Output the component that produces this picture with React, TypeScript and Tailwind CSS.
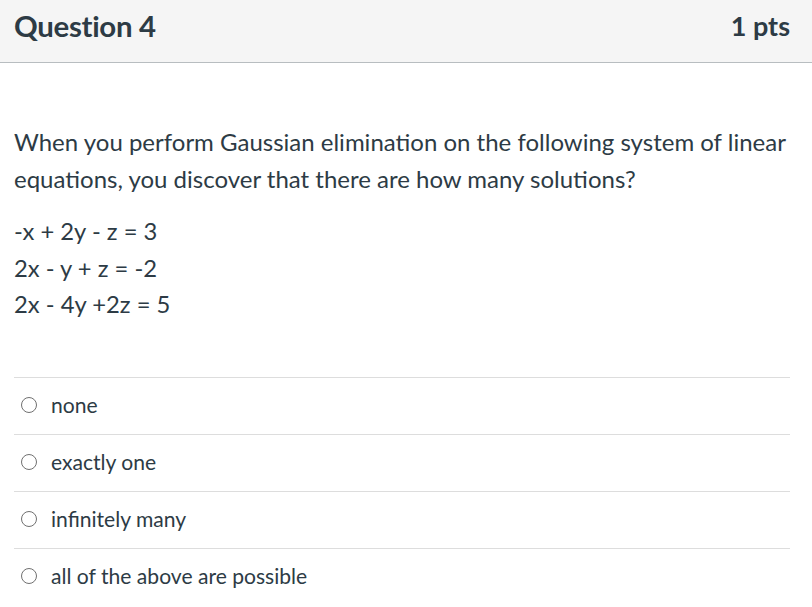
import React from "react";

const answers = ["none", "exactly one", "infinitely many", "all of the above are possible"];

export default function App() {
  return (
    <div className="w-[812px] h-[607px] bg-white text-[#2d3b45] overflow-hidden" style={{ fontFamily: "Lato, 'Noto Sans', sans-serif" }}>
      <div className="h-[63px] bg-[#f5f5f5] border-b border-[#b8bdc0] flex items-center justify-between pl-[14px] pr-[22px]">
        <div className="text-[29.4px] font-bold tracking-[-0.3px] pb-[10px]">Question 4</div>
        <div className="text-[27px] font-bold pb-[10px]">1 pts</div>
      </div>
      <div className="px-[14px] pt-[60px]">
        <p className="text-[24px] leading-[37px]">
          When you perform Gaussian elimination on the following system of linear equations, you discover that there are how many solutions?
        </p>
        <div className="mt-[16px] text-[23.8px] leading-[36.5px]">
          <div>-x + 2y - z = 3</div>
          <div>2x - y + z = -2</div>
          <div>2x - 4y +2z = 5</div>
        </div>
        <div className="mt-[54px] mr-[8px]">
          {answers.map((a) => (
            <div key={a} className="h-[57px] border-t border-[#dddddd] flex items-center pl-[7px] pb-[2px]">
              <span className="w-[16px] h-[16px] rounded-full border-[1.5px] border-[#707070] bg-white shrink-0" />
              <span className="ml-[14px] text-[21.1px]">{a}</span>
            </div>
          ))}
        </div>
      </div>
    </div>
  );
}
